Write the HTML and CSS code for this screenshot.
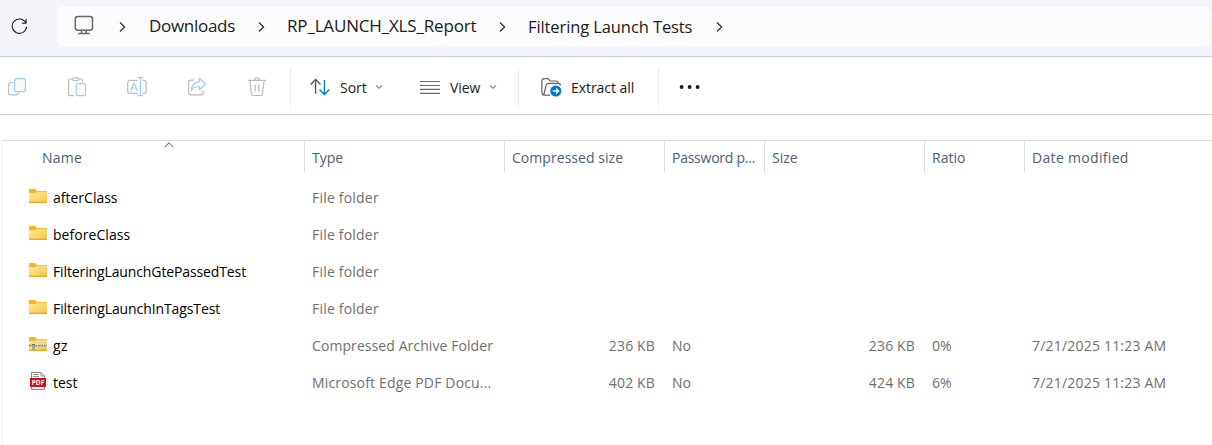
FILE: index.html
```html
<!DOCTYPE html>
<html lang="en">
<head>
<meta charset="utf-8">
<title>Filtering Launch Tests</title>
<link rel="stylesheet" href="styles.css">
</head>
<body>
<svg class="defs" width="0" height="0">
  <defs>
    <linearGradient id="fold" x1="0" y1="0" x2="1" y2="1"><stop offset="0" stop-color="#ffe9a6"/><stop offset="1" stop-color="#fdc537"/></linearGradient>
    <symbol id="folder" viewBox="0 0 18 14">
      <path d="M0 1Q0 0 1 0H6L8 2H18V6H0Z" fill="#f9b51c"/>
      <path d="M0 4H6L8 2.8H18V13.4H0Z" fill="url(#fold)"/>
      <path d="M0 13.3H18" stroke="#e3a51f" stroke-width="1.2"/>
    </symbol>
    <symbol id="crumb" viewBox="0 0 7 12"><path d="M1 1.5L5.6 6L1 10.5" fill="none" stroke="#333" stroke-width="1.3"/></symbol>
    <symbol id="drop" viewBox="0 0 8 6"><path d="M1 1.3L4 4.3L7 1.3" fill="none" stroke="#777" stroke-width="1.1"/></symbol>
  </defs>
</svg>
<header class="nav">
  <svg class="refresh" width="17" height="17" viewBox="0 0 17 17" fill="none" stroke="#222" stroke-width="1.1"><path d="M14.9 5A7.2 7.2 0 1 0 15.6 8.8M15.1 1V5.2H10.8"/></svg>
  <nav class="address">
    <svg class="monitor" width="20" height="20" viewBox="0 0 20 20" fill="none" stroke="#666" stroke-width="1.5"><rect x="1.3" y="1.5" width="17.2" height="13.7" rx="2.4"/><path d="M7.5 15.5V18M12.2 15.5V18M4.2 18.6H15.7"/></svg>
    <svg class="sep"><use href="#crumb"/></svg>
    <span class="crumb downloads">Downloads</span>
    <svg class="sep"><use href="#crumb"/></svg>
    <span class="crumb report">RP_LAUNCH_XLS_Report</span>
    <svg class="sep"><use href="#crumb"/></svg>
    <span class="crumb current">Filtering Launch Tests</span>
    <svg class="sep"><use href="#crumb"/></svg>
  </nav>
</header>
<div class="toolbar">
  <div class="group actions">
    <svg width="20" height="20" viewBox="0 0 20 20" fill="none" stroke-width="1.2"><path d="M6.5 5.5H4Q1.6 5.5 1.6 8V15.2Q1.6 17.8 4.2 17.8H9Q11.3 17.8 11.6 15.5" stroke="#bcbcbc"/><rect x="7.6" y="1.6" width="10.8" height="13" rx="2.2" stroke="#9fcdf1" fill="#fafafa"/></svg>
    <svg width="20" height="20" viewBox="0 0 20 20" fill="none" stroke-width="1.2"><path d="M5.5 2H2.8Q1.6 2 1.6 3.2V17.4Q1.6 18.6 2.8 18.6H6.6M11.5 2H14.2Q15.4 2 15.4 3.2V5" stroke="#bcbcbc"/><rect x="5.6" y=".8" width="6" height="2.8" rx="1.4" stroke="#bcbcbc"/><rect x="9.2" y="6.6" width="9.3" height="12" rx="1.2" stroke="#9fcdf1" fill="#fafafa"/></svg>
    <svg width="20" height="20" viewBox="0 0 20 20" fill="none" stroke-width="1.2"><path d="M10.7 3.4H3.2Q.7 3.4.7 6V13.8Q.7 16.4 3.2 16.4H10.7M15.8 3.4H16.8Q19.2 3.4 19.2 6V13.8Q19.2 16.4 16.8 16.4H15.8" stroke="#bcbcbc"/><path d="M10.5.7H16.2M10.5 18.6H16.2M13.4 1V18.4M3.5 14L7 5.8L10.5 14M4.7 11H9.3" stroke="#9fcdf1"/></svg>
    <svg width="20" height="20" viewBox="0 0 20 20" fill="none" stroke-width="1.2"><path d="M7.2 3.1H4.2Q1.6 3.1 1.6 5.8V15.2Q1.6 17.8 4.2 17.8H13.8Q16.4 17.8 16.4 15V13.8" stroke="#bcbcbc"/><path d="M12.4 1.3L18.8 7.4L12.4 12.8V9.8Q7 9.4 4.5 13.3Q4.8 5.4 12.4 4.6Z" stroke="#9fcdf1" fill="#f7fbfe" stroke-linejoin="round"/></svg>
    <svg width="20" height="20" viewBox="0 0 20 20" fill="none" stroke="#bcbcbc" stroke-width="1.2"><path d="M1 3.4H19M7.4 3.2Q7.6.9 10 .9T12.6 3.2M2.9 3.6L4.6 17.3Q4.8 18.5 6 18.5H14Q15.2 18.5 15.4 17.3L17.1 3.6M8.2 7.5V14.5M11.8 7.5V14.5"/></svg>
  </div>
  <div class="group arrange">
    <div class="button sort">
      <svg width="20" height="20" viewBox="0 0 20 20" fill="none" stroke-width="1.3"><path d="M5.6 17V2.7M.7 7.5L5.6 2.4L10.5 7.5" stroke="#555"/><path d="M14.4 3V17.3M9.5 12.5L14.4 17.5L19.3 12.5" stroke="#0078d4"/></svg>
      <span class="label">Sort</span><svg class="drop"><use href="#drop"/></svg>
    </div>
    <div class="button view">
      <svg width="20" height="20" viewBox="0 0 20 20" stroke="#686868" stroke-width="1.2"><path d="M0 4.5H20M0 8.5H20M0 12.3H20M0 16.3H20"/></svg>
      <span class="label">View</span><svg class="drop"><use href="#drop"/></svg>
    </div>
  </div>
  <div class="group extract">
    <svg width="21" height="20" viewBox="0 0 21 20" fill="none" stroke="#666" stroke-width="1.2"><path d="M2.7 18.2Q.9 17.5.9 15.5V4Q.9 1.6 3.3 1.6H6.2Q7.1 1.6 7.7 2.4L9.2 4H14.6Q17 4 17.4 6M2.7 18.2L5 8.6Q5.5 6.4 7.6 6.4H17.6Q19.4 6.4 19.4 8.5M2.7 18.2H9"/><circle cx="14.8" cy="14" r="5.6" fill="#0078d4" stroke="none"/><path d="M11.8 14H17.4M15 11.4L17.6 14L15 16.6" stroke="#fff" stroke-width="1.3"/></svg>
    <span class="label">Extract all</span>
  </div>
  <div class="group more">
    <svg width="22" height="6" viewBox="0 0 22 6" fill="#191919"><circle cx="2.6" cy="3" r="1.9"/><circle cx="10.6" cy="3" r="1.9"/><circle cx="18.6" cy="3" r="1.9"/></svg>
  </div>
</div>
<main class="files">
  <div class="row head">
    <span class="cell name"><span class="t-name">Name</span><svg class="ascending" width="10" height="6" viewBox="0 0 10 6" fill="none" stroke="#555"><path d="M.6 5L5 .8L9.4 5"/></svg></span>
    <span class="cell">Type</span><span class="cell t-comp">Compressed size</span><span class="cell t-pass">Password p...</span><span class="cell">Size</span><span class="cell">Ratio</span><span class="cell t-date">Date modified</span>
  </div>
  <div class="row"><span class="cell name"><svg class="icon"><use href="#folder"/></svg><span>afterClass</span></span><span class="cell t-type">File folder</span></div>
  <div class="row"><span class="cell name"><svg class="icon"><use href="#folder"/></svg><span class="t-before">beforeClass</span></span><span class="cell t-type">File folder</span></div>
  <div class="row"><span class="cell name"><svg class="icon"><use href="#folder"/></svg><span class="t-gte">FilteringLaunchGtePassedTest</span></span><span class="cell t-type">File folder</span></div>
  <div class="row"><span class="cell name"><svg class="icon"><use href="#folder"/></svg><span class="t-tags">FilteringLaunchInTagsTest</span></span><span class="cell t-type">File folder</span></div>
  <div class="row"><span class="cell name"><svg class="icon" viewBox="0 0 18 14"><use href="#folder" width="18" height="14"/><path d="M0 8.5H18" stroke="#cfc5a4" stroke-width="3"/><path d="M6 8H18" stroke="#f6f1e2" stroke-width="2" stroke-dasharray="1 1"/><path d="M0 8.5H18" stroke="#777" stroke-width="1" stroke-dasharray="2 1"/><path d="M3 7H6V13H3Z" fill="#a2a2a2"/><path d="M3 7.5H6" stroke="#6b6b6b"/></svg><span class="t-gz">gz</span></span><span class="cell t-arch">Compressed Archive Folder</span><span class="cell num">236 KB</span><span class="cell">No</span><span class="cell num">236 KB</span><span class="cell">0%</span><span class="cell t-stamp">7/21/2025 11:23 AM</span></div>
  <div class="row"><span class="cell name"><svg class="icon pdf" viewBox="0 0 18 18"><path d="M2.5.5H12L15.5 4V17.5H2.5Z" fill="#fff" stroke="#888"/><path d="M12 .5V4H15.5M4 2.5H10M4 4.5H10" fill="none" stroke="#999"/><rect x="1" y="6" width="16" height="9" fill="#db0a16"/><text x="9" y="13" class="pdf-text" textLength="12.5" lengthAdjust="spacingAndGlyphs">PDF</text></svg><span>test</span></span><span class="cell t-edge">Microsoft Edge PDF Docu...</span><span class="cell num">402 KB</span><span class="cell">No</span><span class="cell num">424 KB</span><span class="cell">6%</span><span class="cell t-stamp">7/21/2025 11:23 AM</span></div>
</main>
</body>
</html>
```
FILE: styles.css
```css
* { box-sizing: border-box; }
body { margin: 0; height: 445px; overflow: hidden; background: #fff; color: #1b1b1b; font-family: "Open Sans", "Noto Sans", sans-serif; font-size: 14px; white-space: nowrap; }
svg { display: block; flex: none; }
.defs { position: absolute; }
.nav { height: 57px; padding: 6px 2px 0 11px; display: flex; align-items: flex-start; background: #f3f5fa; border-bottom: 1px solid #c6ced8; }
.refresh { margin: 12px 29px 0 0; }
.address { flex: 1; height: 40px; padding-left: 17px; display: flex; align-items: center; background: #fcfcfc; border-radius: 6px; }
.monitor { margin: -2px 25px 0 0; }
.sep { width: 7px; height: 12px; margin-top: 1px; }
.crumb { font-size: 17px; line-height: 24px; }
.downloads { width: 86px; margin: -1px 23px 0; letter-spacing: -.3px; }
.report { width: 190px; margin: -1px 22px 0; letter-spacing: -.17px; }
.current { width: 165px; margin: 1px 23px 0 22px; font-size: 16.5px; letter-spacing: -.1px; }
.toolbar { height: 58px; padding-top: 10px; display: flex; border-bottom: 1px solid #c6ced6; }
.group { height: 40px; display: flex; align-items: center; border-right: 1px solid #ebebeb; }
.actions { width: 291px; gap: 40px; padding-left: 7px; }
.arrange { width: 228px; padding-left: 19px; }
.button { display: flex; align-items: center; gap: 10px; }
.sort { width: 110px; }
.sort .label { width: 25px; }
.view .label { width: 29px; }
.label { margin-top: 1px; letter-spacing: -.05px; }
.drop { width: 8px; height: 6px; }
.extract { width: 140px; padding-left: 22px; gap: 9px; }
.more { border: 0; padding-left: 20px; }
.files { height: 305px; margin: 25px 0 0 2px; border-top: 1px solid #dadada; border-left: 1px solid #f2f2f2; }
.row { display: grid; grid-template-columns: 302px 200px 160px 100px 160px 100px 1fr; height: 37px; color: #707070; }
.cell { display: flex; align-items: center; padding-left: 7px; }
.name { padding-left: 26px; gap: 6px; color: #000; }
.num { justify-content: flex-end; padding-right: 10px; letter-spacing: .15px; }
.head { height: 32px; margin-bottom: 6px; color: #4c607a; }
.head .cell { padding-top: 1px; border-right: 1px solid #dfdfdf; }
.head .cell:last-child { border: 0; }
.head .name { padding-left: 39px; color: #4c607a; }
.t-name { width: 116px; letter-spacing: .25px; }
.t-comp { letter-spacing: .05px; }
.t-pass { letter-spacing: -.25px; }
.t-date { letter-spacing: .32px; }
.t-type { letter-spacing: .2px; }
.t-before { letter-spacing: .05px; }
.t-gte { letter-spacing: -.12px; }
.t-tags { letter-spacing: -.1px; }
.t-gz { letter-spacing: .5px; }
.t-arch { letter-spacing: .08px; }
.t-edge { letter-spacing: .16px; }
.t-stamp { letter-spacing: .2px; }
.ascending { align-self: flex-start; }
.icon { width: 18px; height: 14px; margin-top: -4px; }
.pdf { height: 18px; }
.pdf-text { font: bold 7px "Open Sans", sans-serif; fill: #fff; text-anchor: middle; }
```
